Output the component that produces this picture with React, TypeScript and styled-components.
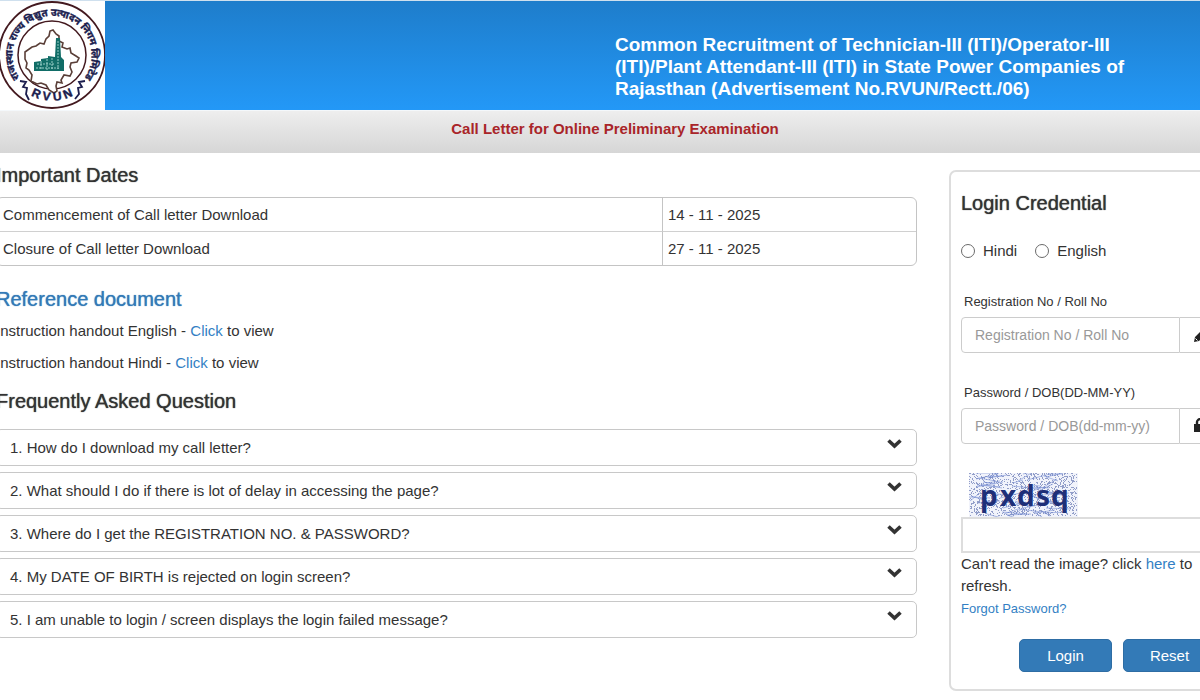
import React from "react";
import styled, { createGlobalStyle } from "styled-components";

const GlobalStyle = createGlobalStyle`
  *, *::before, *::after { box-sizing: border-box; }
  body {
    margin: 0;
    background: #fff;
    color: #333;
    font-family: "Liberation Sans", "Noto Sans", sans-serif;
    font-size: 15px;
    line-height: 22px;
    overflow: hidden;
  }
  button, input { font: inherit; color: inherit; }
`;

const Header = styled.header`
  display: flex;
  border-top: 1px solid #cfe0ee;
  background: linear-gradient(#1e7dcb, #2398f7);
`;

const LogoBox = styled.div`
  flex: 0 0 105px;
  height: 109px;
  background: #fff;
`;

const Title = styled.h1`
  margin: 0 0 0 auto;
  width: 585px;
  padding: 33px 50px 0 0;
  color: #fff;
  font-size: 19px;
  line-height: 22px;
  font-weight: 700;
`;

const Notice = styled.p`
  margin: 0;
  padding: 7px 0 13px 30px;
  border-top: 1px solid #f4f8fb;
  background: linear-gradient(#eeeeee, #d6d6d6);
  color: #a92529;
  font-weight: 700;
  text-align: center;
`;

const Main = styled.main`
  display: grid;
  grid-template-columns: minmax(0, 1fr) 285px;
  gap: 32px;
  align-items: start;
  margin: 0 -34px 0 -4px;
`;

const Info = styled.div`
  padding-top: 11px;
`;

const Heading = styled.h2<{ $link?: boolean }>`
  margin: 0;
  color: ${(p) => (p.$link ? "#337ab7" : "#333")};
  font-size: 20px;
  line-height: 22px;
  font-weight: 400;
  text-shadow: 0 0 1px currentColor;
`;

const Dates = styled.table`
  width: 100%;
  margin: 11px 0 22px;
  border: 1px solid #c4c4c4;
  border-radius: 6px;
  border-spacing: 0;
  table-layout: fixed;
`;

const Cell = styled.td<{ $second?: boolean }>`
  width: ${(p) => (p.$second ? "254px" : "auto")};
  padding: 6px 5px 5px ${(p) => (p.$second ? "5px" : "6px")};
  border-left: ${(p) => (p.$second ? "1px solid #c4c4c4" : "0")};
  tr + tr & { border-top: 1px solid #d0d0d0; }
`;

const Link = styled.a<{ $small?: boolean }>`
  color: #337fc4;
  text-decoration: none;
  font-size: ${(p) => (p.$small ? "13px" : "inherit")};
`;

const Handout = styled.p`
  margin: 10px 0;
`;

const FaqSection = styled.section`
  margin-top: 16px;
`;

const Faq = styled.div`
  display: grid;
  gap: 6px;
  margin-top: 17px;
`;

const Question = styled.button`
  display: flex;
  align-items: center;
  justify-content: space-between;
  height: 37px;
  padding: 0 14px 0 13px;
  border: 1px solid #c8c8c8;
  border-radius: 5px;
  background: #fff;
  text-align: left;
`;

const Chevron = styled.svg`
  width: 16px;
  height: 16px;
  margin-bottom: 9px;
`;

const Card = styled.form`
  margin-top: 17px;
  padding: 20px 10px 17px;
  border: 2px solid #ddd;
  border-radius: 7px;
`;

const Languages = styled.div`
  display: flex;
  gap: 18px;
  margin: 26px 0 29px;
`;

const Language = styled.label`
  display: flex;
  align-items: center;
  gap: 8px;
`;

const Radio = styled.input`
  appearance: none;
  width: 14px;
  height: 14px;
  margin: 0;
  border: 1px solid #6b6b6b;
  border-radius: 50%;
  &:checked { background: #337ab7; }
`;

const FieldLabel = styled.label`
  display: block;
  padding-left: 3px;
  font-size: 13px;
`;

const Group = styled.div`
  display: flex;
  height: 36px;
  margin: 4px 0 29px;
`;

const Input = styled.input`
  flex: 1;
  min-width: 0;
  padding: 0 13px;
  border: 1px solid #ccc;
  border-radius: 4px 0 0 4px;
  background: #fff;
  font-size: 14px;
  &::placeholder { color: #999; opacity: 1; }
`;

const AddOn = styled.span`
  display: flex;
  align-items: center;
  justify-content: center;
  width: 42px;
  border: 1px solid #ccc;
  border-left: 0;
  border-radius: 0 4px 4px 0;
`;

const Captcha = styled.svg`
  display: block;
  width: 109px;
  height: 44px;
  margin-left: 8px;
`;

const CaptchaInput = styled.input`
  display: block;
  width: 100%;
  height: 36px;
  padding: 0 13px;
  border: 2px solid #ddd;
  background: #fff;
`;

const Hint = styled.p`
  margin: 0;
`;

const Actions = styled.div`
  display: flex;
  justify-content: flex-end;
  gap: 11px;
  margin-top: 19px;
  padding-right: 6px;
`;

const Action = styled.button`
  width: 93px;
  height: 33px;
  border: 1px solid #2e6da4;
  border-radius: 5px;
  background: #337ab7;
  color: #fff;
`;

const Emblem = () => (
  <svg width="105" height="109" viewBox="0 0 105 109" role="img" aria-label="RVUN">
    <defs>
      <path id="arcTop" d="M19 76A39.500 39.500 0 1 1 85 76" />
      <path id="arcBottom" d="M14 78A44 44 0 0 0 90 78" />
    </defs>
    <g fill="none" stroke="#43191f">
      <circle cx="52" cy="54" r="53" strokeWidth="1.8" />
      <circle cx="52" cy="54" r="34" strokeWidth="1.5" />
    </g>
    <path
      d="M25 51l7-5 4-1 4-3 4 1 2-5 3-3 1-5 3-1 3 4 3 2 0 5 4 2-1 4 5 2 3-1 1 5 5 3 3 2-2 4-6 1-1 4 2 5-2 4-6-1-3 5 1 3-5-1-1 4 1 5-3 2-5-3-3-5-5-2-4 1-6-3 1-6-3-5-3-2 1-5-2-4z"
      fill="#fff" stroke="#5a3f38" strokeWidth="1.6"
    />
    <path d="M34 61l7-1v-2l7-1v-2l7 1 1-19h4l1 19 3 3v11H34z" fill="#116d67" />
    <path d="M37 63h18M36 67h24M41 60v9M47 58v11M52 57v12M58 40v28" fill="none" stroke="#a8d9d3" strokeWidth=".9" strokeDasharray="2 1" />
    <g fill="#1b1d4e" fontWeight="700" stroke="#1b1d4e" strokeWidth=".4">
      <text fontSize="10" fontFamily='"Noto Sans Devanagari", "Noto Sans", sans-serif'>
        <textPath href="#arcTop" startOffset="50%" textAnchor="middle">राजस्थान राज्य विद्युत उत्पादन निगम लिमिटेड</textPath>
      </text>
      <text fontSize="12" fontFamily='"Liberation Sans", sans-serif'>
        <textPath href="#arcBottom" startOffset="50%" textAnchor="middle">R V U N</textPath>
      </text>
    </g>
    <path d="M20 80l6 1-3 5 4 1-1 6 3 6M85 80l-6 1 3 5-4 1 1 6-4 5" fill="none" stroke="#1b1d4e" strokeWidth="1.8" />
  </svg>
);

const noise = (() => {
  let seed = 17;
  const next = () => {
    seed = (seed * 16807) % 2147483647;
    return seed / 2147483647;
  };
  let dots = "";
  for (let i = 0; i < 1300; i++) {
    dots += `M${Math.floor(next() * 108)} ${Math.floor(next() * 43)}h1v1h-1z`;
  }
  let lines = "";
  for (let i = 0; i < 60; i++) {
    const x = Math.floor(next() * 85);
    const y = Math.floor(next() * 43);
    lines += `M${x} ${y}l${Math.floor(8 + next() * 20)} ${Math.floor(next() * 18 - 9)}`;
  }
  return { dots, lines };
})();

const questions = [
  "1. How do I download my call letter?",
  "2. What should I do if there is lot of delay in accessing the page?",
  "3. Where do I get the REGISTRATION NO. & PASSWORD?",
  "4. My DATE OF BIRTH is rejected on login screen?",
  "5. I am unable to login / screen displays the login failed message?",
];

const dates = [
  ["Commencement of Call letter Download", "14 - 11 - 2025"],
  ["Closure of Call letter Download", "27 - 11 - 2025"],
];

export default function App() {
  return (
    <>
      <GlobalStyle />
      <Header>
        <LogoBox><Emblem /></LogoBox>
        <Title>
          Common Recruitment of Technician-III (ITI)/Operator-III (ITI)/Plant Attendant-III (ITI) in State Power Companies of Rajasthan (Advertisement No.RVUN/Rectt./06)
        </Title>
      </Header>
      <Notice>Call Letter for Online Preliminary Examination</Notice>
      <Main>
        <Info>
          <Heading>Important Dates</Heading>
          <Dates>
            <tbody>
              {dates.map(([name, date]) => (
                <tr key={name}>
                  <Cell>{name}</Cell>
                  <Cell $second>{date}</Cell>
                </tr>
              ))}
            </tbody>
          </Dates>
          <Heading $link>Reference document</Heading>
          <Handout>Instruction handout English - <Link href="#english">Click</Link> to view</Handout>
          <Handout>Instruction handout Hindi - <Link href="#hindi">Click</Link> to view</Handout>
          <FaqSection>
            <Heading>Frequently Asked Question</Heading>
            <Faq>
              {questions.map((q) => (
                <Question key={q} type="button">
                  {q}
                  <Chevron viewBox="0 0 16 16" aria-hidden="true">
                    <path d="M2.500 5.500L8.500 11l6-5.500" fill="none" stroke="#333" strokeWidth="3.600" />
                  </Chevron>
                </Question>
              ))}
            </Faq>
          </FaqSection>
        </Info>
        <Card onSubmit={(e) => e.preventDefault()}>
          <Heading>Login Credential</Heading>
          <Languages>
            <Language><Radio type="radio" name="language" value="hi" />Hindi</Language>
            <Language><Radio type="radio" name="language" value="en" />English</Language>
          </Languages>
          <FieldLabel htmlFor="reg">Registration No / Roll No</FieldLabel>
          <Group>
            <Input id="reg" placeholder="Registration No / Roll No" />
            <AddOn>
              <svg width="16" height="16" viewBox="0 0 16 16" aria-hidden="true">
                <path d="M1 15l1-5 7.500-7.500 4 4L6 14zM10.500 1.500L12 0l4 4-1.500 1.500z" fill="#222" />
                <path d="M2.500 11.500l2 2" stroke="#fff" />
              </svg>
            </AddOn>
          </Group>
          <FieldLabel htmlFor="pwd">Password / DOB(DD-MM-YY)</FieldLabel>
          <Group>
            <Input id="pwd" type="password" placeholder="Password / DOB(dd-mm-yy)" />
            <AddOn>
              <svg width="16" height="16" viewBox="0 0 16 16" aria-hidden="true">
                <path d="M1 6h14v8H1z" fill="#222" />
                <path d="M4 8V4a4 3 0 0 1 8 0v4" fill="none" stroke="#222" strokeWidth="2.400" />
              </svg>
            </AddOn>
          </Group>
          <Captcha viewBox="0 0 109 44" role="img" aria-label="Captcha">
            <rect width="109" height="44" fill="#f1f3fb" />
            <path d={noise.dots} fill="#5365a8" opacity=".6" />
            <path d={noise.lines} fill="none" stroke="#6f87cf" opacity=".55" />
            <text x="11 31 48 67 82" y="33" fontFamily='"Noto Sans", sans-serif' fontWeight="700" fontSize="28" fill="#1e2f78">pxdsq</text>
          </Captcha>
          <CaptchaInput aria-label="Captcha text" />
          <Hint>Can't read the image? click <Link href="#refresh">here</Link> to refresh.</Hint>
          <Hint><Link href="#forgot" $small>Forgot Password?</Link></Hint>
          <Actions>
            <Action type="submit">Login</Action>
            <Action type="reset">Reset</Action>
          </Actions>
        </Card>
      </Main>
    </>
  );
}
